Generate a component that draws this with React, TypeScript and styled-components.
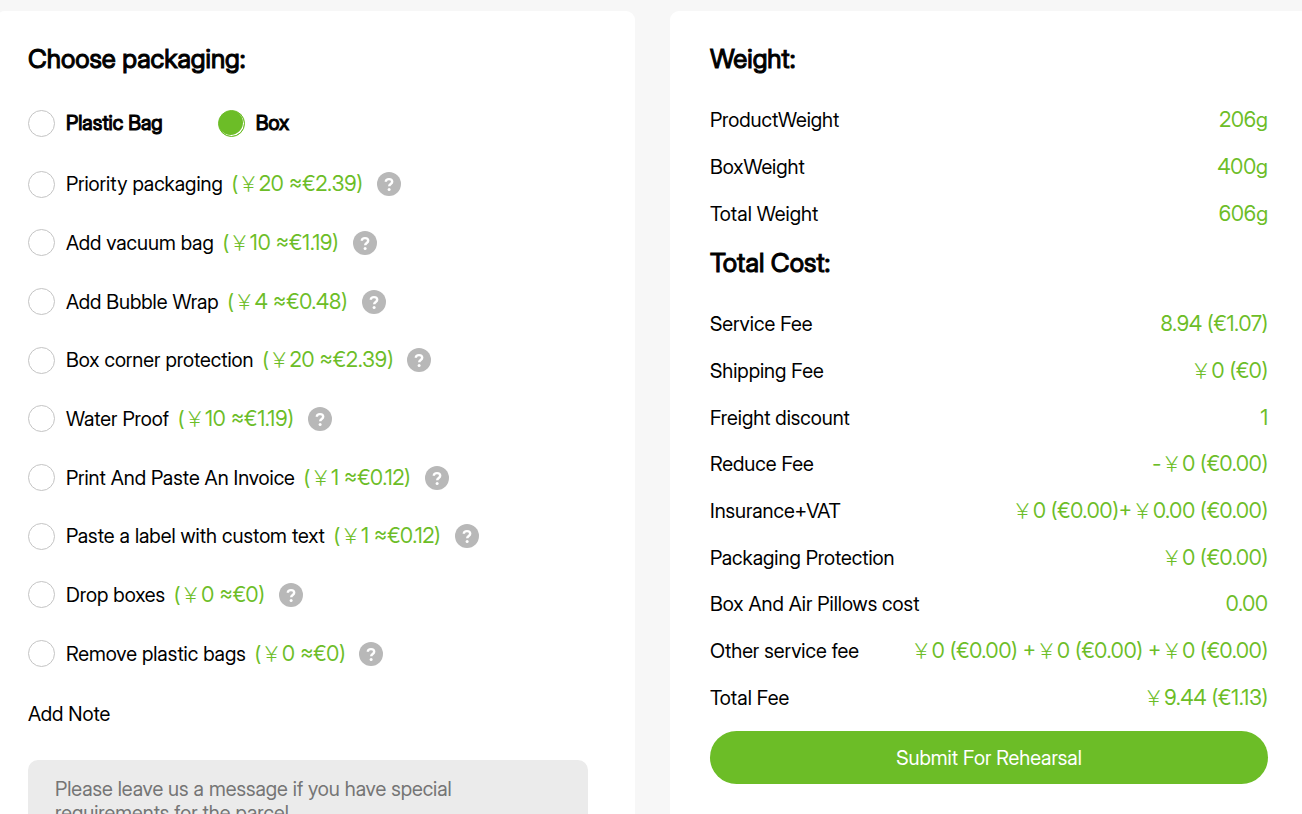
import { useId, useState } from "react";
import styled, { createGlobalStyle } from "styled-components";

const GREEN = "#6cbd27";

const GlobalStyle = createGlobalStyle`
  *, *::before, *::after { box-sizing: border-box; }
  body {
    margin: 0;
    background: #f7f7f7;
    color: #000;
    font: 400 20px/28px "Inter Display", Inter, "Noto Sans CJK SC", sans-serif;
    overflow-x: hidden;
  }
  h2, dl, dd { margin: 0; }
`;

const Page = styled.main`
  display: grid;
  grid-template-columns: 1fr 1fr;
  gap: 35px;
  margin: 11px -7px 0 -4px;
`;

const Panel = styled.section<{ $side: "left" | "right" }>`
  min-width: 0;
  background: #fff;
  border-radius: 9px;
  padding: ${(p) => (p.$side === "left" ? "22px 47px 40px 32px" : "22px 41px 40px 40px")};
`;

const Title = styled.h2`
  margin: 6px 0 18px;
  font-size: 26px;
  line-height: 40px;
  font-weight: 400;
  -webkit-text-stroke: 1px #000;
`;

const TypeRow = styled.div`
  display: flex;
  gap: 55px;
  margin: 30px 0 18px;
`;

const Choice = styled.label<{ $strong?: boolean }>`
  display: flex;
  align-items: center;
  gap: 11px;
  white-space: nowrap;
  -webkit-text-stroke: ${(p) => (p.$strong ? "1px #000" : "0")};
`;

const Mark = styled.input`
  appearance: none;
  flex: none;
  width: 27px;
  height: 27px;
  margin: 0;
  border: 1px solid #c4c4c4;
  border-radius: 50%;
  background: #fff;
  &:checked {
    border-color: ${GREEN};
    background: ${GREEN};
    box-shadow: inset -1px -1px 0 #fff;
  }
`;

const Options = styled.div`
  display: grid;
  grid-auto-rows: 1fr;
  min-height: 528px;
`;

const Option = styled.div`
  display: flex;
  align-items: center;
  gap: 14px;
`;

const Price = styled.span`
  margin-left: -2px;
  color: ${GREEN};
  font-size: 21px;
`;

const Yen = styled.span`
  font-family: "Noto Sans CJK SC", sans-serif;
  font-weight: 300;
  line-height: 20px;
`;

const Help = styled.button`
  width: 24px;
  height: 24px;
  padding: 0;
  border: 0;
  background: none;
  svg { display: block; }
`;

const NoteLabel = styled.label`
  display: block;
  margin: 17px 0 32px;
`;

const Note = styled.textarea`
  display: block;
  width: 100%;
  height: 160px;
  padding: 17px 27px;
  border: 0;
  border-radius: 10px;
  background: #ebebeb;
  font: inherit;
  line-height: 24px;
  resize: none;
  &::placeholder { color: #757575; }
`;

const Figures = styled.dl<{ $height: number }>`
  display: grid;
  grid-auto-rows: 1fr;
  min-height: ${(p) => p.$height}px;
`;

const Figure = styled.div`
  display: flex;
  align-items: center;
  justify-content: space-between;
  white-space: nowrap;
  dd {
    color: ${GREEN};
    font-size: 21px;
  }
`;

const Submit = styled.button`
  display: block;
  width: 100%;
  height: 53px;
  margin-top: 10px;
  border: 0;
  border-radius: 27px;
  background: ${GREEN};
  color: #fff;
  font: inherit;
`;

const options = [
  ["Priority packaging", "¥20 ≈€2.39"],
  ["Add vacuum bag", "¥10 ≈€1.19"],
  ["Add Bubble Wrap", "¥4 ≈€0.48"],
  ["Box corner protection", "¥20 ≈€2.39"],
  ["Water Proof", "¥10 ≈€1.19"],
  ["Print And Paste An Invoice", "¥1 ≈€0.12"],
  ["Paste a label with custom text", "¥1 ≈€0.12"],
  ["Drop boxes", "¥0 ≈€0"],
  ["Remove plastic bags", "¥0 ≈€0"],
];

const weights = [
  ["ProductWeight", "206g"],
  ["BoxWeight", "400g"],
  ["Total Weight", "606g"],
];

const costs = [
  ["Service Fee", "8.94 (€1.07)"],
  ["Shipping Fee", "¥0 (€0)"],
  ["Freight discount", "1"],
  ["Reduce Fee", "-¥0 (€0.00)"],
  ["Insurance+VAT", "¥0 (€0.00)+¥0.00 (€0.00)"],
  ["Packaging Protection", "¥0 (€0.00)"],
  ["Box And Air Pillows cost", "0.00"],
  ["Other service fee", "¥0 (€0.00) +¥0 (€0.00) +¥0 (€0.00)"],
  ["Total Fee", "¥9.44 (€1.13)"],
];

/** Sets each yen sign of an amount as the light full-width form. */
function Amount({ text }: { text: string }) {
  return (
    <>
      {text.split("¥").map((part, i) => (
        <span key={i}>
          {i > 0 && <Yen>{"\uFFE5"}</Yen>}
          {part}
        </span>
      ))}
    </>
  );
}

function FigureList({ rows, height }: { rows: string[][]; height: number }) {
  return (
    <Figures $height={height}>
      {rows.map(([name, value]) => (
        <Figure key={name}>
          <dt>{name}</dt>
          <dd>
            <Amount text={value} />
          </dd>
        </Figure>
      ))}
    </Figures>
  );
}

export default function App() {
  const [kind, setKind] = useState("Box");
  const noteId = useId();
  return (
    <>
      <GlobalStyle />
      <Page>
        <Panel $side="left">
          <Title>Choose packaging:</Title>
          <TypeRow>
            {["Plastic Bag", "Box"].map((k) => (
              <Choice key={k} $strong>
                <Mark type="radio" name="kind" checked={kind === k} onChange={() => setKind(k)} />
                {k}
              </Choice>
            ))}
          </TypeRow>
          <Options>
            {options.map(([label, price]) => (
              <Option key={label}>
                <Choice>
                  <Mark type="checkbox" />
                  {label}
                  <Price>
                    <Amount text={`(${price})`} />
                  </Price>
                </Choice>
                <Help type="button" aria-label={`About ${label}`}>
                  <svg width="24" height="24" viewBox="0 0 24 24" fill="none">
                    <circle cx="12" cy="12" r="12" fill="#b8b8b8" />
                    <path
                      d="M8.8 9.7C8.9 8 10.2 7.1 12 7.1c1.900 0 3.200 1 3.200 2.600 0 2.300-3 2.200-3 4.600"
                      stroke="#fff"
                      strokeWidth="2.4"
                    />
                    <circle cx="12.1" cy="17.5" r="1.5" fill="#fff" />
                  </svg>
                </Help>
              </Option>
            ))}
          </Options>
          <NoteLabel htmlFor={noteId}>Add Note</NoteLabel>
          <Note
            id={noteId}
            placeholder="Please leave us a message if you have special requirements for the parcel"
          />
        </Panel>
        <Panel $side="right">
          <Title>Weight:</Title>
          <FigureList rows={weights} height={140} />
          <Title>Total Cost:</Title>
          <FigureList rows={costs} height={420} />
          <Submit type="button">Submit For Rehearsal</Submit>
        </Panel>
      </Page>
    </>
  );
}
